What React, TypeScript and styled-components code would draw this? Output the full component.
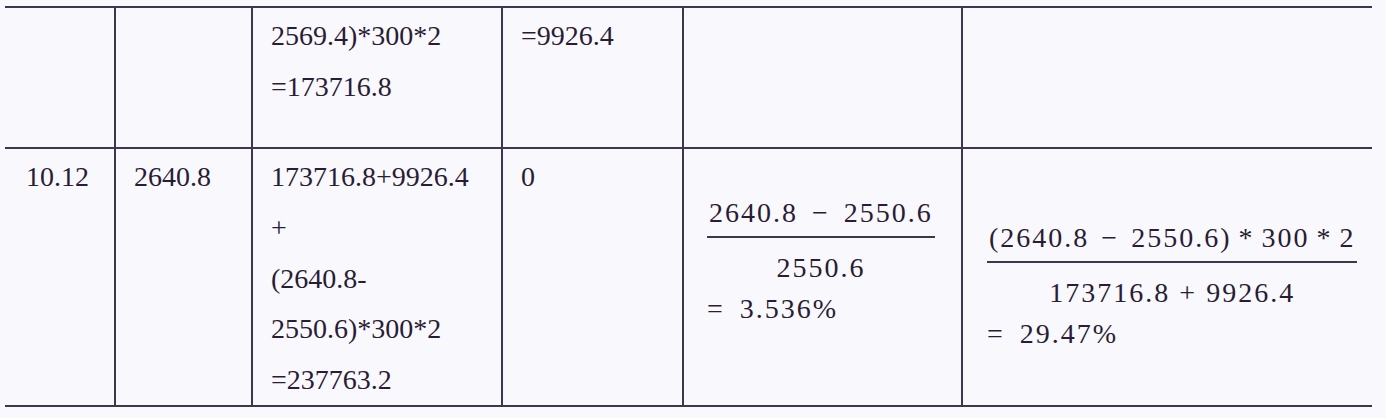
import React from "react";
import styled, { createGlobalStyle } from "styled-components";

const ink = "#2a1c35";
const rule = "#3e3550";

const GlobalStyle = createGlobalStyle`
  html, body {
    margin: 0;
    padding: 0;
    background: #f9f9fd;
  }
  body {
    width: 1386px;
    height: 418px;
    overflow: hidden;
    font-family: "Liberation Serif", serif;
    color: #2a1c35;
  }
`;

const Sheet = styled.div`
  padding: 6px 0 0 5px;
`;

const Grid = styled.div`
  display: grid;
  grid-template-columns: 111px 137px 250px 181px 279px 409px;
  grid-template-rows: 141px 258px;
  width: 1367px;
  border-top: 2px solid ${rule};
`;

const Cell = styled.div<{ $top?: number; $left?: number }>`
  box-sizing: border-box;
  border-bottom: 2px solid ${rule};
  border-right: 2px solid ${rule};
  padding: ${(p) => p.$top ?? 3}px 0 0 ${(p) => p.$left ?? 18}px;
  overflow: hidden;

  &:nth-child(6n) {
    border-right: none;
  }
`;

const Line = styled.div`
  font-family: "Liberation Serif", serif;
  font-size: 28px;
  line-height: 50.75px;
  color: ${ink};
  white-space: nowrap;
`;

// formula typeset like the LaTeX images in the source
const Fraction = styled.div`
  display: inline-flex;
  flex-direction: column;
  align-items: center;
`;

const MathRow = styled.div`
  font-family: "Liberation Serif", serif;
  font-size: 28px;
  line-height: 28px;
  letter-spacing: 2px;
  color: ${ink};
  white-space: nowrap;
`;

const Num = styled(MathRow)`
  padding: 0 2px;
`;

const Bar = styled.div`
  align-self: stretch;
  height: 2px;
  margin-top: 9px;
  background: ${rule};
`;

const Den = styled(MathRow)`
  margin-top: 16px;
`;

const Result = styled(MathRow)`
  margin-top: 13px;
`;

const Op = styled.span<{ $gap: number }>`
  margin: 0 ${(p) => p.$gap}px;
`;

const App: React.FC = () => {
  return (
    <>
      <GlobalStyle />
      <Sheet>
        <Grid>
          <Cell />
          <Cell />
          <Cell>
            <Line>2569.4)*300*2</Line>
            <Line>=173716.8</Line>
          </Cell>
          <Cell>
            <Line>=9926.4</Line>
          </Cell>
          <Cell />
          <Cell />

          <Cell $left={21}>
            <Line>10.12</Line>
          </Cell>
          <Cell>
            <Line>2640.8</Line>
          </Cell>
          <Cell>
            <Line>173716.8+9926.4</Line>
            <Line>+</Line>
            <Line>(2640.8-</Line>
            <Line>2550.6)*300*2</Line>
            <Line>=237763.2</Line>
          </Cell>
          <Cell>
            <Line>0</Line>
          </Cell>
          <Cell $top={50} $left={23}>
            <Fraction>
              <Num>
                2640.8<Op $gap={14}>−</Op>2550.6
              </Num>
              <Bar />
              <Den>2550.6</Den>
            </Fraction>
            <Result>
              =<Op $gap={3}> </Op>3.536%
            </Result>
          </Cell>
          <Cell $top={75} $left={24}>
            <Fraction>
              <Num>
                (2640.8<Op $gap={12}>−</Op>2550.6)<Op $gap={7}>*</Op>300
                <Op $gap={7}>*</Op>2
              </Num>
              <Bar />
              <Den>
                173716.8<Op $gap={9}>+</Op>9926.4
              </Den>
            </Fraction>
            <Result>
              =<Op $gap={3}> </Op>29.47%
            </Result>
          </Cell>
        </Grid>
      </Sheet>
    </>
  );
};

export default App;
